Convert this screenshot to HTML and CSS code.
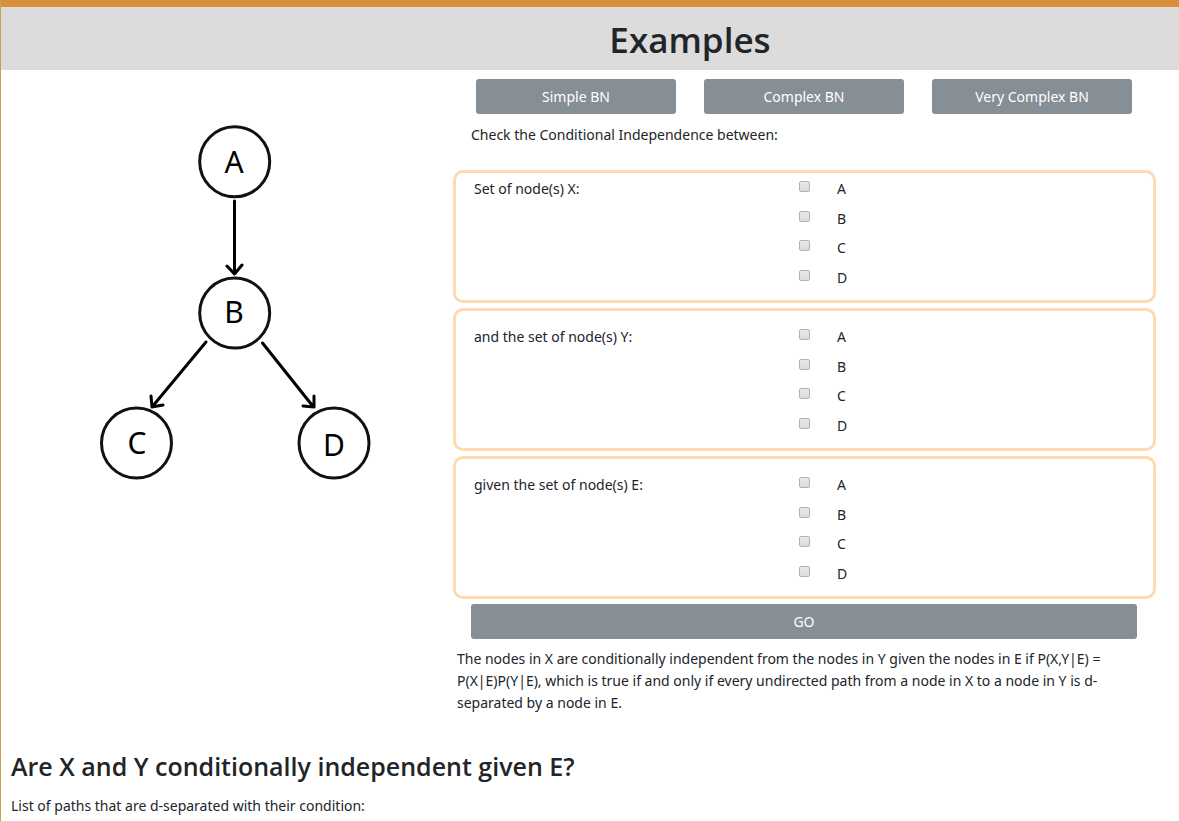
FILE: index.html
```html
<!DOCTYPE html>
<html lang="en">
<head>
<meta charset="utf-8">
<title>Examples</title>
<link rel="stylesheet" href="styles.css">
</head>
<body>
<main class="page">
  <header class="banner"><h1 class="title">Examples</h1></header>
  <div class="workspace">
    <figure class="graph">
      <svg class="network" viewBox="0 0 280 364" role="img" aria-label="Bayesian network: A to B, B to C and D">
        <g class="edges">
          <path d="M139.500 81V153M132 146L139.500 154L147 145"/>
          <path d="M111 222L57 287M56 276L57 287L68 285"/>
          <path d="M167.500 223L218.500 287M208 286L219 287L219 276"/>
        </g>
        <g class="nodes">
          <circle cx="139.700" cy="41.700" r="35"/>
          <circle cx="139.700" cy="193" r="35"/>
          <circle cx="41.500" cy="323" r="35"/>
          <circle cx="239" cy="323" r="35"/>
        </g>
        <g class="names">
          <text x="139" y="53">A</text>
          <text x="139" y="203">B</text>
          <text x="42" y="334">C</text>
          <text x="239" y="336">D</text>
        </g>
      </svg>
    </figure>
    <section class="panel">
      <div class="presets">
        <button class="button" type="button">Simple BN</button>
        <button class="button" type="button">Complex BN</button>
        <button class="button" type="button">Very Complex BN</button>
      </div>
      <form class="query">
        <p class="prompt">Check the Conditional Independence between:</p>
        <div class="node-set first" role="group" aria-labelledby="set-x">
          <span id="set-x">Set of node(s) X:</span>
          <div class="options">
            <label class="option"><input class="tick" type="checkbox" name="x">A</label>
            <label class="option"><input class="tick" type="checkbox" name="x">B</label>
            <label class="option"><input class="tick" type="checkbox" name="x">C</label>
            <label class="option"><input class="tick" type="checkbox" name="x">D</label>
          </div>
        </div>
        <div class="node-set" role="group" aria-labelledby="set-y">
          <span id="set-y">and the set of node(s) Y:</span>
          <div class="options">
            <label class="option"><input class="tick" type="checkbox" name="y">A</label>
            <label class="option"><input class="tick" type="checkbox" name="y">B</label>
            <label class="option"><input class="tick" type="checkbox" name="y">C</label>
            <label class="option"><input class="tick" type="checkbox" name="y">D</label>
          </div>
        </div>
        <div class="node-set" role="group" aria-labelledby="set-e">
          <span id="set-e">given the set of node(s) E:</span>
          <div class="options">
            <label class="option"><input class="tick" type="checkbox" name="e">A</label>
            <label class="option"><input class="tick" type="checkbox" name="e">B</label>
            <label class="option"><input class="tick" type="checkbox" name="e">C</label>
            <label class="option"><input class="tick" type="checkbox" name="e">D</label>
          </div>
        </div>
        <button class="button go" type="button">GO</button>
      </form>
      <p class="note">The nodes in X are conditionally independent from the nodes in Y given the nodes in E if P(X,Y|E) = P(X|E)P(Y|E), which is true if and only if every undirected path from a node in X to a node in Y is d-separated by a node in E.</p>
    </section>
  </div>
  <section class="result">
    <h2 class="question">Are X and Y conditionally independent given E?</h2>
    <p class="paths">List of paths that are d-separated with their condition:</p>
  </section>
</main>
</body>
</html>
```
FILE: styles.css
```css
* { box-sizing: border-box; }
body {
  margin: 0;
  background: #fff;
  color: #212529;
  font: 14px/22px "Noto Sans", "Open Sans", sans-serif;
}
h1, h2, p, figure { margin: 0; }
.page {
  border-left: 1px solid #cca04a;
  min-height: 100vh;
  overflow: hidden;
}
.banner {
  border-top: 7px solid #d6903a;
  background: #dcdcdc;
  padding: 9px 0 6px 200px;
  text-align: center;
}
.title { font: 600 35px/48px "Open Sans", sans-serif; }
.workspace {
  display: grid;
  grid-template-columns: 452fr 703fr;
  padding-right: 23px;
}
.graph {
  padding: 50px 0 0 16px;
  text-align: center;
}
.network { width: 280px; max-width: 100%; }
.edges {
  fill: none;
  stroke: #000;
  stroke-width: 3;
  stroke-linecap: round;
  stroke-linejoin: round;
}
.nodes { fill: none; stroke: #111; stroke-width: 3; }
.names {
  font: 30px "Noto Sans", sans-serif;
  text-anchor: middle;
}
.panel { padding-top: 9px; }
.presets {
  display: grid;
  grid-template-columns: repeat(3, 1fr);
  gap: 28px;
  padding: 0 24px 0 23px;
}
.button {
  height: 35px;
  padding: 1px 12px 0;
  border: 0;
  border-radius: 3px;
  background: #868e96;
  color: #fff;
  font: inherit;
}
.query { display: flex; flex-direction: column; }
.prompt { padding: 10px 18px 24px; }
.node-set {
  display: grid;
  grid-template-columns: 325fr 336fr;
  margin-bottom: 5px;
  padding: 15px 18px 4px;
  border: 3px solid #ffdab0;
  border-radius: 10px;
}
.first { padding: 5px 18px 4px; }
.options {
  display: grid;
  grid-template-rows: repeat(4, 1fr);
  min-height: 118px;
}
.option { display: flex; align-items: flex-start; gap: 27px; }
.tick {
  appearance: none;
  width: 11px;
  height: 11px;
  margin: 3px 0 0;
  border: 1px solid #b2b2b2;
  border-radius: 2px;
  background: linear-gradient(#e8e8e8, #dcdcdc);
}
.tick:checked { background: #868e96; }
.go { margin: 0 19px 0 18px; }
.note { padding: 9px 32px 0 4px; }
.result { padding: 32px 10px 0; }
.question { font: 600 25px/40px "Open Sans", sans-serif; }
.paths { padding-top: 9px; }
```
